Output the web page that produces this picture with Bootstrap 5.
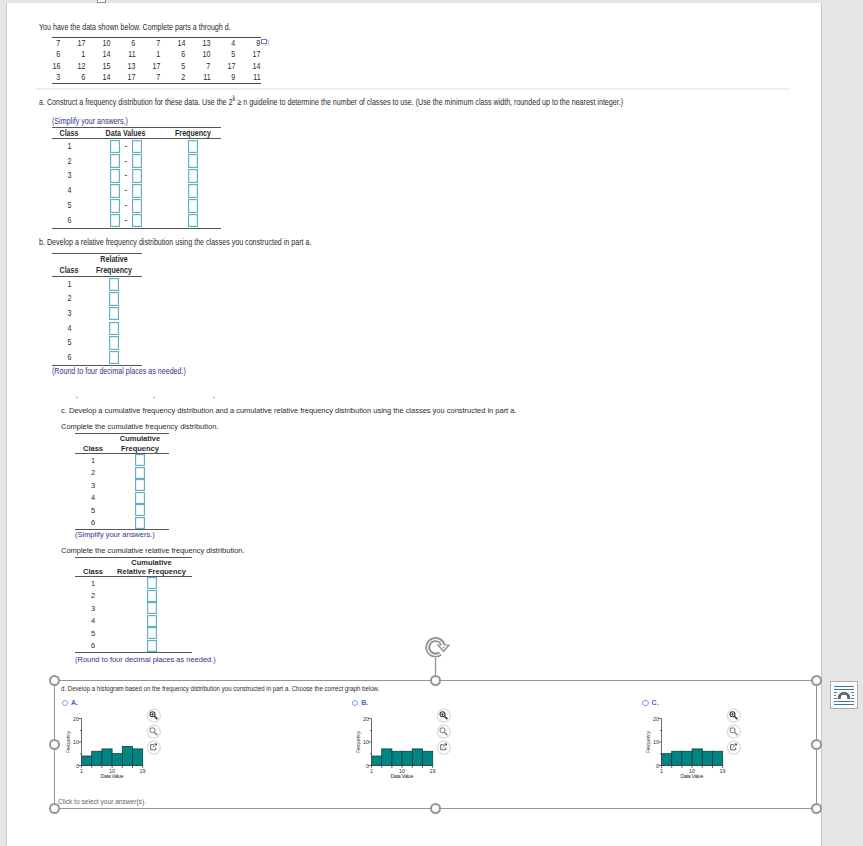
<!DOCTYPE html>
<html lang="en">
<head>
<meta charset="utf-8">
<meta name="viewport" content="width=device-width, initial-scale=1">
<title>Frequency distributions</title>
<link href="https://cdn.jsdelivr.net/npm/bootstrap@5.3.0/dist/css/bootstrap.min.css" rel="stylesheet">
<style>
body{background:#e5e5e5;font-family:"Liberation Sans",Arial,sans-serif;font-size:9.3px;color:#2b2b2b;height:846px;overflow:hidden}
.sheet{width:814px;height:843px;margin:3px 0 0 6px;background:#fff;border-left:1px solid #c9c9c9;border-right:1px solid #c6c6c6;box-sizing:content-box}
.ln{white-space:nowrap;transform-origin:0 50%;width:max-content;height:12px;line-height:12px}
.upper .ln,.upper .sq{transform:scaleX(.764)}
.sq{display:inline-block;white-space:nowrap}
.lower{font-size:7.5px;margin-left:54px}
.lower .ln{transform:scaleX(.996)}
.upper{margin-left:32px;padding-top:18px}
.hint,.upper .hint{color:#32328f}
.indent{margin-left:13px}
.indent-low{margin-left:14px}
.h13{height:13px;line-height:13px}
.h11{height:11px;line-height:11px}
.nums{width:209px;height:47px;margin:4px 0 0 13px;display:grid;grid-template-columns:8.5px repeat(8,25px);grid-auto-rows:11.25px;line-height:11.25px;border-top:1px solid #4a4a4a;border-bottom:1px solid #4a4a4a;text-align:right}
.nums .sq{transform-origin:100% 50%;justify-self:end}
.popicon{margin:4px 0 0 0}
.sep{height:2px;width:753px;margin:4px 0 6px -3px;background:#ebebf1}
.sup-k{position:relative;top:-4px;font-size:8.5px;font-family:"Liberation Serif",serif;font-style:italic}
.grid-t{display:grid;border-top:1px solid #555;border-bottom:1px solid #555;text-align:center}
.hd{display:grid;grid-template-columns:subgrid;grid-column:1/-1;border-bottom:1px solid #555;font-weight:700;align-items:end;line-height:10.5px}
.hd span,.hd .sq{display:block}
.hd .sq{margin:0 -20px}
.ta{width:169px;margin-left:13px;height:102px;grid-template:11px repeat(6,14.83px)/34px 79px 56px}
.tb{width:90px;margin-left:13px;height:113px;grid-template:23px repeat(6,14.67px)/34px 56px}
.tb .hd{padding-bottom:1px}
.tc{width:94px;height:97px;margin-left:14px;grid-template:20px repeat(6,12.5px)/36px 58px}
.td2{width:117px;height:96px;margin-left:14px;grid-template:19px repeat(6,12.5px)/36px 81px}
.lower .hd{line-height:9.3px}
.cell{display:flex;justify-content:center;align-items:center;line-height:1}
.upper .cell{padding-left:.5px}
.dash{width:12px}
.bx{width:10px;height:13.6px;border:1px solid #62b0c4;box-shadow:inset 0 0 0 .5px #c9e6ee;background:#fff}
.lower .bx{height:12px}
.specks{width:139px;height:1px;margin:20px 0 6px 15px;display:grid;grid-template-columns:77px 60px 2px}
.specks i{width:2px;height:1px;background:#a3a8b8}
.frame{position:relative;width:763px;height:129px;margin:15px 0 0 47px;border:1px solid #959595;font-size:6.6px}
.ask{height:8px;line-height:8px;margin:4px 0 0 6px;transform:scaleX(.923)}
.click{height:8px;line-height:8px;margin:5px 0 0 3px;color:#666}
#choices{height:94px;margin:6px -130px 0 6.5px}
.plot{padding-top:1px;margin-left:-1px}
.knob{position:absolute;width:11px;height:11px;border:2px solid #959595;border-radius:50%;background:#fff}
.choice{width:290.3px}
.rad{width:6.5px;height:6.5px;border:1px solid #8497e6;border-radius:50%}
.lab{color:#4a5fd0;font-weight:700;font-size:7px;line-height:8px;margin-left:3px}
.opt{position:absolute;left:830px;top:681px;width:28px;height:28px}
.nub{position:absolute;left:97px;top:-6px;width:9px;height:9px;background:#fff;border:1px solid #8a8a8a}
.turn{position:absolute;left:368px;top:-46px}
</style>
<script src="https://cdn.jsdelivr.net/npm/bootstrap@5.3.0/dist/js/bootstrap.bundle.min.js"></script>
</head>
<body class="position-relative">
<div class="overflow-hidden">
<main class="sheet">
 <section class="upper">
  <div class="ln">You have the data shown below. Complete parts a through d.</div>
  <div class="d-flex"><div class="nums" id="nums"></div>
   <svg class="popicon" width="10" height="10" viewBox="0 0 10 10"><path d="M3.500 3.500h4v4.500H3.500" fill="none" stroke="#b9bfe2"/><rect x=".5" y="2.500" width="5" height="4" fill="#fff" stroke="#6f7cc4"/></svg></div>
  <div class="sep"></div>
  <div class="ln">a. Construct a frequency distribution for these data. Use the 2<span class="sup-k">k</span> ≥ n guideline to determine the number of classes to use. (Use the minimum class width, rounded up to the nearest integer.)</div>
  <div class="ln hint indent" style="margin-top:7px">(Simplify your answers.)</div>
  <div class="grid-t ta" data-kind="a"><div class="hd"><span><b class="sq">Class</b></span><span><b class="sq">Data Values</b></span><span><b class="sq">Frequency</b></span></div></div>
  <div class="ln h13" style="margin:7px 0 4px">b. Develop a relative frequency distribution using the classes you constructed in part a.</div>
  <div class="grid-t tb" data-kind="b"><div class="hd"><span><b class="sq">Class</b></span><span><b class="sq">Relative<br>Frequency</b></span></div></div>
  <div class="ln hint h11 indent">(Round to four decimal places as needed.)</div>
 </section>
 <section class="lower">
  <div class="specks"><i></i><i></i><i></i></div>
  <div class="ln h13 mb-1">c. Develop a cumulative frequency distribution and a cumulative relative frequency distribution using the classes you constructed in part a.</div>
  <div class="ln">Complete the cumulative frequency distribution.</div>
  <div class="grid-t tc" data-kind="c"><div class="hd"><span><b class="sq">Class</b></span><span><b class="sq">Cumulative<br>Frequency</b></span></div></div>
  <div class="ln hint indent-low mb-1" style="height:10px;line-height:10px">(Simplify your answers.)</div>
  <div class="ln h13">Complete the cumulative relative frequency distribution.</div>
  <div class="grid-t td2" data-kind="c"><div class="hd"><span><b class="sq">Class</b></span><span><b class="sq">Cumulative<br>Relative Frequency</b></span></div></div>
  <div class="ln hint h11 indent-low" style="margin-top:1px">(Round to four decimal places as needed.)</div>
 </section>
 <section class="frame">
  <div class="ln ask">d. Develop a histogram based on the frequency distribution you constructed in part a. Choose the correct graph below.</div>
  <div class="d-flex" id="choices"></div>
  <div class="ln click">Click to select your answer(s).</div>
  <svg class="turn" width="30" height="46" viewBox="0 0 30 46"><path d="M12.500 23V46" stroke="#959595" stroke-width="1.300"/><path d="M17.200 18.600A7.800 7.800 0 1 1 20.200 10.500" fill="none" stroke="#959595" stroke-width="5"/><path d="M13.500 9.500H27.500L20.500 17.500Z" fill="#959595"/><path d="M16.800 18.900A7.800 7.800 0 1 1 20.100 11.200H23.200L20.500 14.300 17.800 11.200H20" fill="none" stroke="#fff" stroke-width="1.200"/></svg>
 </section>
</main>
</div>
<div class="nub"></div>
<svg class="opt" viewBox="0 0 28 28"><rect x=".5" y=".5" width="27" height="27" fill="#fff" stroke="#ababab"/><path d="M4 5.500H24M4 8.500H24M4 11.500h3M21 11.500h3M4 14.500h2M22 14.500h2M4 17.500h3M21 17.500h3M4 20.500H24M4 23.500H24" stroke="#3f77b5"/><path d="M9.300 18V17a4.700 4.700 0 0 1 9.400 0v1" fill="none" stroke="#6a6a6a" stroke-width="3"/></svg>
<script>
const data=[7,17,10,6,7,14,13,4,9,6,1,14,11,1,6,10,5,17,16,12,15,13,17,5,7,17,14,3,6,14,17,7,2,11,9,11];
document.getElementById('nums').innerHTML=data.map(n=>`<span class="sq">${n}</span>`).join('');
const box='<span class="bx"></span>';
document.querySelectorAll('[data-kind]').forEach(t=>{
  const k=t.dataset.kind;let h='';
  for(let i=1;i<=6;i++){
    h+=`<div class="cell"><span class="sq">${i}</span></div>`;
    if(k==='a')h+=`<div class="cell">${box}<span class="dash">-</span>${box}</div>`;
    h+=`<div class="cell">${box}</div>`;
  }
  t.insertAdjacentHTML('beforeend',h);
});
const glass=(c,p)=>`<circle cx="6.500" cy="6.300" r="2.500" fill="none" stroke="${c}" stroke-width="1.100"/><path d="M8.400 8.200l3 2.900" stroke="${c}" stroke-width="1.500"/>`+(p?`<path d="M5.200 6.300h2.600M6.500 5v2.600" stroke="${c}" stroke-width=".9"/>`:'');
const pop='<path d="M8 4.700H4.700v5.100h5V7.500M7 7.300l2.800-3" fill="none" stroke="#555" stroke-width=".9"/><path d="M8.200 3.400h2.600V6z" fill="#333"/>';
const disc=g=>`<svg class="d-block" width="16" height="16" viewBox="0 0 16 16"><circle cx="7.800" cy="7.700" r="6.500" fill="#fff" stroke="#dcdcdc" stroke-width="1.300"/>${g}</svg>`;
document.getElementById('choices').innerHTML=[['A',[4,6,7,5,8,7]],['B',[4,7,6,6,7,6]],['C',[5,6,6,7,6,6]]].map(([n,v])=>{
  const bars=v.map((q,i)=>`<rect x="${20.5+i*10.2}" y="${56.5-q*2.37}" width="10.200" height="${q*2.37}" fill="#008583" stroke="#0b3f3f" stroke-width=".8"/>`).join('');
  const ticks=v.map((q,i)=>`M${20.5+i*10.2} 56v3`).join('')+'M81.700 56v3';
  return `<div class="choice flex-shrink-0"><div class="d-flex align-items-center" style="height:8px"><span class="rad"></span><span class="lab">${n}.</span></div>
  <div class="d-flex plot"><svg width="85" height="82" viewBox="0 -1 85 82" font-size="5.400" fill="#333">${bars}<path d="M20.500 9.500V56.500H82M17.500 9.500h3M17.500 33h3M17.500 56.500h3M19 21.500h2M19 45h2${ticks}" fill="none" stroke="#444" stroke-width=".8"/>
  <text x="18" y="11.500" text-anchor="end">20</text><text x="18" y="35" text-anchor="end">10</text><text x="18" y="58.500" text-anchor="end">0</text><text x="20.500" y="63.700" text-anchor="middle">1</text><text x="51" y="63.700" text-anchor="middle">10</text><text x="81.500" y="63.700" text-anchor="middle">19</text><text x="51" y="69.300" text-anchor="middle" textLength="23">Data Value</text><text transform="translate(9.300 33) rotate(-90)" text-anchor="middle" font-size="4.800" textLength="22">Frequency</text></svg>
  <div>${disc(glass('#333',1))}${disc(glass('#888'))}${disc(pop)}</div></div></div>`}).join('');
/* resize handles, centred on the frame line */
const frame=document.querySelector('.frame');
[[0,0],[381,0],[762,0],[0,64],[762,64],[0,128],[381,128],[762,128]].forEach(([x,y])=>{
  frame.insertAdjacentHTML('beforeend',`<span class="knob" style="left:${x-6}px;top:${y-6}px"></span>`);
});
</script>
</body>
</html>
